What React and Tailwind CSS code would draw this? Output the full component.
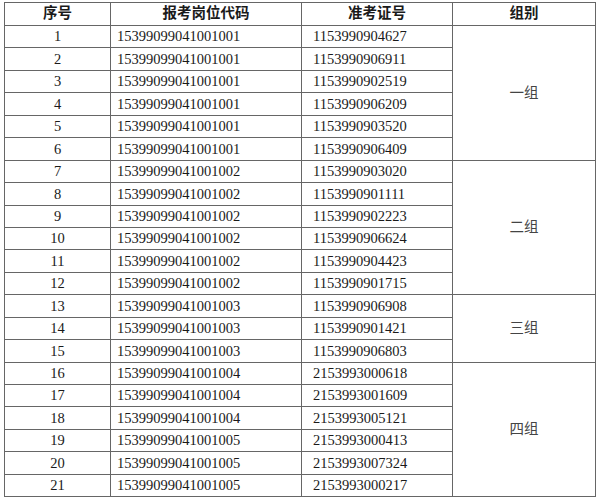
import React from 'react';

const rows = [
  ['1', '15399099041001001', '1153990904627'],
  ['2', '15399099041001001', '1153990906911'],
  ['3', '15399099041001001', '1153990902519'],
  ['4', '15399099041001001', '1153990906209'],
  ['5', '15399099041001001', '1153990903520'],
  ['6', '15399099041001001', '1153990906409'],
  ['7', '15399099041001002', '1153990903020'],
  ['8', '15399099041001002', '1153990901111'],
  ['9', '15399099041001002', '1153990902223'],
  ['10', '15399099041001002', '1153990906624'],
  ['11', '15399099041001002', '1153990904423'],
  ['12', '15399099041001002', '1153990901715'],
  ['13', '15399099041001003', '1153990906908'],
  ['14', '15399099041001003', '1153990901421'],
  ['15', '15399099041001003', '1153990906803'],
  ['16', '15399099041001004', '2153993000618'],
  ['17', '15399099041001004', '2153993001609'],
  ['18', '15399099041001004', '2153993005121'],
  ['19', '15399099041001005', '2153993000413'],
  ['20', '15399099041001005', '2153993007324'],
  ['21', '15399099041001005', '2153993000217'],
];

// 组别 合并单元格: 起始行 -> [跨行数, 名称]
const groups = { 0: [6, '一组'], 6: [6, '二组'], 12: [3, '三组'], 15: [6, '四组'] };

const cell = 'border border-[#666] p-0';

export default function App() {
  return (
    <div className="bg-white w-[599px] h-[500px] pt-[2px] pl-[4px] font-['Liberation_Serif','Noto_Sans_CJK_SC',serif] text-[14.5px] text-[#1a1a1a]">
      <table className="border-collapse table-fixed w-[591px]">
        <colgroup>
          <col className="w-[106px]" />
          <col className="w-[191px]" />
          <col className="w-[151px]" />
          <col className="w-[143px]" />
        </colgroup>
        <thead>
          <tr className="h-[23px] font-bold">
            <th className={`${cell} text-center`}>序号</th>
            <th className={`${cell} text-center`}>报考岗位代码</th>
            <th className={`${cell} text-center`}>准考证号</th>
            <th className={`${cell} text-center`}>组别</th>
          </tr>
        </thead>
        <tbody>
          {rows.map((r, i) => (
            <tr key={i} className="h-[22.45px] leading-none">
              <td className={`${cell} text-center`}>{r[0]}</td>
              <td className={`${cell} pl-[6px]`}>{r[1]}</td>
              <td className={`${cell} pl-[11px]`}>{r[2]}</td>
              {groups[i] && (
                <td rowSpan={groups[i][0]} className={`${cell} text-center text-[#444]`}>
                  {groups[i][1]}
                </td>
              )}
            </tr>
          ))}
        </tbody>
      </table>
    </div>
  );
}
